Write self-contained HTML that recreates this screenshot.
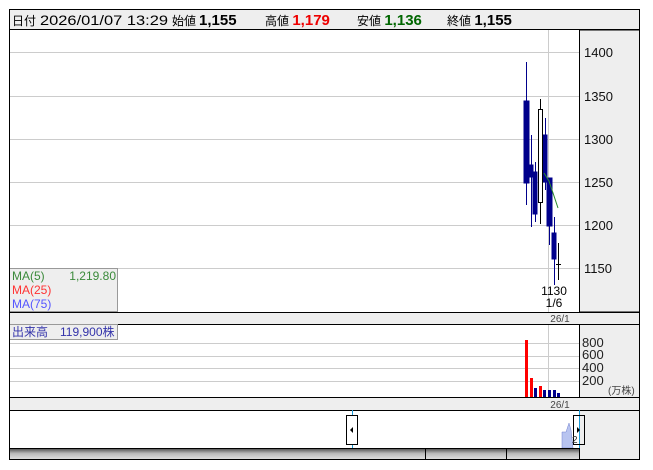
<!DOCTYPE html>
<html><head><meta charset="utf-8"><style>
body{margin:0;background:#fff;width:653px;height:470px;overflow:hidden;font-family:"Liberation Sans","Noto Sans CJK JP",sans-serif}
svg{position:absolute;left:0;top:0}
</style></head><body>
<svg width="653" height="470" xmlns="http://www.w3.org/2000/svg" font-family="Liberation Sans, Noto Sans CJK JP, sans-serif">
<rect x="9.5" y="9.5" width="630" height="20" fill="#eee" stroke="#000"/>
<text x="12" y="25" font-size="12">日付</text>
<text x="40" y="25" font-size="14" textLength="128" lengthAdjust="spacingAndGlyphs">2026/01/07 13:29</text>
<text x="172" y="25" font-size="12">始値</text>
<text x="199" y="25" font-weight="bold" font-size="15">1,155</text>
<text x="265" y="25" font-size="12">高値 <tspan font-weight="bold" font-size="15" fill="#e00">1,179</tspan></text>
<text x="357" y="25" font-size="12">安値 <tspan font-weight="bold" font-size="15" fill="#060">1,136</tspan></text>
<text x="447" y="25" font-size="12">終値 <tspan font-weight="bold" font-size="15">1,155</tspan></text>
<rect x="9.5" y="29.5" width="630" height="430" fill="none" stroke="#000"/>
<rect x="579.5" y="30" width="60" height="282" fill="#eee" stroke="#000"/>
<g stroke="#ccc" stroke-width="1">
<line x1="10" y1="52.5" x2="579" y2="52.5"/><line x1="10" y1="96.5" x2="579" y2="96.5"/>
<line x1="10" y1="139.5" x2="579" y2="139.5"/><line x1="10" y1="182.5" x2="579" y2="182.5"/>
<line x1="10" y1="225.5" x2="579" y2="225.5"/><line x1="10" y1="268.5" x2="579" y2="268.5"/>
<line x1="548.5" y1="30" x2="548.5" y2="312"/>
<line x1="548.5" y1="324" x2="548.5" y2="397"/>
<line x1="10" y1="343.5" x2="579" y2="343.5"/><line x1="10" y1="356.5" x2="579" y2="356.5"/>
<line x1="10" y1="368.5" x2="579" y2="368.5"/><line x1="10" y1="381.5" x2="579" y2="381.5"/>
</g>
<g font-size="13" fill="#111">
<text x="584" y="57">1400</text><text x="584" y="101">1350</text><text x="584" y="144">1300</text>
<text x="584" y="187">1250</text><text x="584" y="230">1200</text><text x="584" y="273">1150</text>
</g>
<g stroke="#00008b" fill="#00008b">
<line x1="526.5" y1="62" x2="526.5" y2="205"/><rect x="524" y="101" width="5" height="82"/>
<line x1="531.5" y1="135" x2="531.5" y2="227"/><rect x="529" y="165" width="4" height="12"/>
<line x1="535.5" y1="162" x2="535.5" y2="222"/><rect x="533" y="172" width="4" height="42"/>
<line x1="545.5" y1="118" x2="545.5" y2="190"/><rect x="543" y="135" width="4" height="47"/>
<line x1="549.5" y1="178" x2="549.5" y2="245"/><rect x="547" y="178" width="5" height="48"/>
<line x1="554.5" y1="217" x2="554.5" y2="285"/><rect x="552" y="233" width="4" height="26"/>
</g>
<line x1="540.5" y1="99" x2="540.5" y2="224" stroke="#000"/>
<rect x="538.5" y="109.5" width="4" height="93" fill="#fff" stroke="#000"/>
<line x1="558.5" y1="243" x2="558.5" y2="280" stroke="#000"/><line x1="556" y1="264.5" x2="561" y2="264.5" stroke="#000"/>
<polyline points="544,173 549,181 558,208" fill="none" stroke="#2a8a2a"/>
<text x="554" y="295" font-size="12" text-anchor="middle">1130</text>
<text x="554" y="307" font-size="12" text-anchor="middle">1/6</text>
<rect x="9.5" y="268.5" width="108" height="43" fill="#eee" stroke="#999"/>
<text x="12" y="280" font-size="12" fill="#3a8a3a">MA(5)</text><text x="116" y="280" font-size="12" fill="#3a8a3a" text-anchor="end">1,219.80</text>
<text x="12" y="294" font-size="12" fill="#f33">MA(25)</text>
<text x="12" y="308" font-size="12" fill="#55f">MA(75)</text>
<rect x="9.5" y="312.5" width="630" height="12" fill="#eee" stroke="#000"/>
<text x="560" y="322" font-size="10" fill="#444" text-anchor="middle">26/1</text>
<rect x="579.5" y="324.5" width="60" height="73" fill="#eee" stroke="#000"/>
<g font-size="13" fill="#222"><text x="582" y="347">800</text><text x="582" y="359">600</text><text x="582" y="372">400</text><text x="582" y="385">200</text></g>
<text x="608" y="394" font-size="10" fill="#444">(万株)</text>
<g fill="#f00"><rect x="525" y="340" width="3" height="57"/><rect x="530" y="378" width="3" height="19"/><rect x="539" y="386" width="3" height="11"/></g>
<g fill="#00008b"><rect x="534" y="388" width="3" height="9"/><rect x="543" y="390" width="3" height="7"/><rect x="548" y="390" width="3" height="7"/><rect x="553" y="390" width="3" height="7"/><rect x="557" y="393" width="3" height="4"/></g>
<rect x="9.5" y="324.5" width="108" height="15" fill="#eee" stroke="#999"/>
<text x="12" y="336" font-size="12" fill="#33a">出来高　119,900株</text>
<rect x="9.5" y="397.5" width="630" height="13" fill="#eee" stroke="#000"/>
<text x="560" y="408" font-size="10" fill="#444" text-anchor="middle">26/1</text>
<rect x="579.5" y="410.5" width="60" height="49" fill="#eee" stroke="#000"/>
<polygon points="562,448 562,432 566,432 569,423 571,430 573,448" fill="#b8c4f0" stroke="#7080d0" stroke-width="0.5"/>
<line x1="352.5" y1="410" x2="352.5" y2="448" stroke="#1a9ad6"/>
<line x1="579.5" y1="410" x2="579.5" y2="448" stroke="#1a9ad6"/>
<rect x="346.5" y="415.5" width="11" height="29" fill="#fff" stroke="#000"/>
<polygon points="350,430 353,427 353,433" fill="#000"/>
<rect x="573.5" y="415.5" width="11" height="29" fill="none" stroke="#000"/>
<polygon points="580,430 577,427 577,433" fill="#000"/>
<text x="572" y="443" font-size="10" fill="#333">2</text>
<defs><linearGradient id="g" x1="0" y1="0" x2="0" y2="1"><stop offset="0" stop-color="#444"/><stop offset="0.5" stop-color="#bbb"/><stop offset="1" stop-color="#ddd"/></linearGradient></defs>
<rect x="10" y="448" width="569" height="11" fill="url(#g)"/>
<line x1="10" y1="448.5" x2="579" y2="448.5" stroke="#000"/>
<line x1="425.5" y1="448" x2="425.5" y2="459" stroke="#000"/>
<line x1="506.5" y1="448" x2="506.5" y2="459" stroke="#000"/>
<rect x="9.5" y="9.5" width="630" height="450" fill="none" stroke="#000"/>
</svg>
</body></html>
